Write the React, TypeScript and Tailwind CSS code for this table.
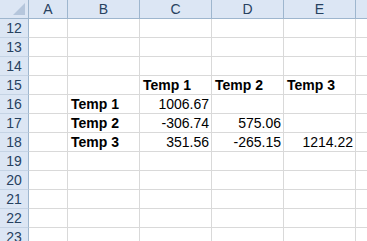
import React from 'react';

const cols = ['A', 'B', 'C', 'D', 'E'];
const rows = [12, 13, 14, 15, 16, 17, 18, 19, 20, 21, 22, 23];

type Cell = { text: string; bold?: boolean; right?: boolean };

const data: Record<number, Record<string, Cell>> = {
  15: {
    C: { text: 'Temp 1', bold: true },
    D: { text: 'Temp 2', bold: true },
    E: { text: 'Temp 3', bold: true },
  },
  16: {
    B: { text: 'Temp 1', bold: true },
    C: { text: '1006.67', right: true },
  },
  17: {
    B: { text: 'Temp 2', bold: true },
    C: { text: '-306.74', right: true },
    D: { text: '575.06', right: true },
  },
  18: {
    B: { text: 'Temp 3', bold: true },
    C: { text: '351.56', right: true },
    D: { text: '-265.15', right: true },
    E: { text: '1214.22', right: true },
  },
};

const gridCols = 'grid grid-cols-[29px_39px_72px_72px_72px_72px_1fr]';

export default function App() {
  return (
    <div
      className="w-[367px] h-[241px] overflow-hidden bg-white text-[14px] leading-none text-black"
      style={{ fontFamily: '"Liberation Sans", Arial, sans-serif' }}
    >
      <div className={`${gridCols} h-[19px] bg-[#dce6f4]`}>
        <div className="relative border-r border-b border-[#9eb6ce]">
          <svg className="absolute right-[3px] bottom-[3px]" width="12" height="12" viewBox="0 0 12 12">
            <polygon points="12,0 12,12 0,12" fill="#b5c6dc" />
          </svg>
        </div>
        {cols.map((c) => (
          <div
            key={c}
            className="flex items-center justify-center border-r border-b border-[#9eb6ce] text-[#27415f]"
          >
            {c}
          </div>
        ))}
        <div className="border-b border-[#9eb6ce]" />
      </div>
      {rows.map((r) => (
        <div key={r} className={`${gridCols} h-[19px]`}>
          <div className="flex items-center justify-center bg-[#dce6f4] border-r border-b border-r-[#9eb6ce] border-b-[#c5d3e4] text-[#27415f]">
            {r}
          </div>
          {cols.map((c) => {
            const cell = data[r]?.[c];
            return (
              <div
                key={c}
                className={`flex items-center border-r border-b border-[#d9d9d9] pl-[3px] pr-[2px] ${
                  cell?.right ? 'justify-end' : 'justify-start'
                } ${cell?.bold ? 'font-bold' : ''}`}
              >
                {cell?.text}
              </div>
            );
          })}
          <div className="border-b border-[#d9d9d9]" />
        </div>
      ))}
    </div>
  );
}
